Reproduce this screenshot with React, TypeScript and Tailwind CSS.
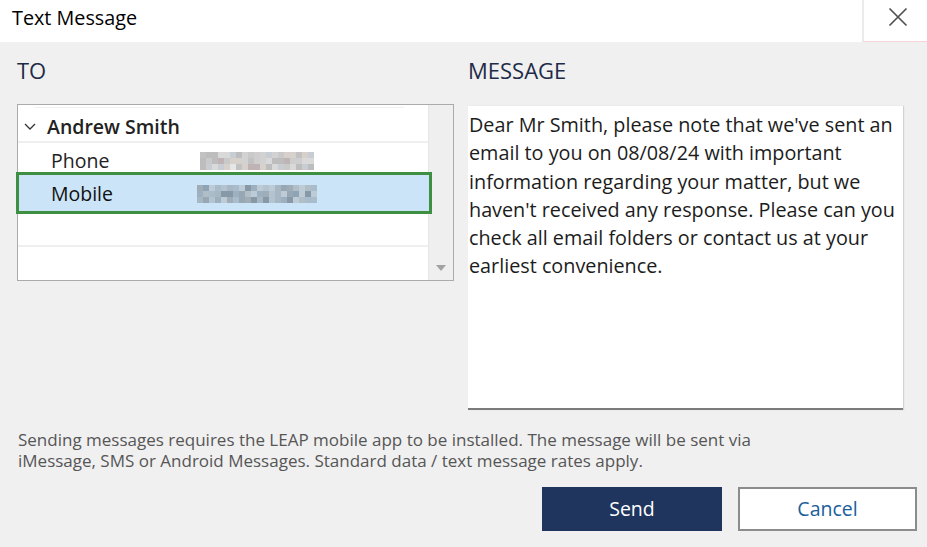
import React from "react";

const messageLines = [
  "Dear Mr Smith, please note that we've sent an",
  "email to you on 08/08/24 with important",
  "information regarding your matter, but we",
  "haven't received any response. Please can you",
  "check all email folders or contact us at your",
  "earliest convenience.",
];

const phonePalette = ["#d9d9d9", "#cecece", "#c9c9c9", "#c2c2c2", "#d6d2cb", "#c8cdd4", "#bfb3b5", "#e6e6e6", "#bdbdbd", "#d2d2d2"];
const mobilePalette = ["#a9bccb", "#9cb0bf", "#b3c4d0", "#8ea4b5", "#bccbd6", "#a0adb6", "#8799a7", "#a7b7c3", "#b0bec8", "#97a8b4"];

// blurred-out number, drawn as a grid of pixel blocks
const Pixelated = ({ cols, palette, seed }: { cols: number; palette: string[]; seed: number }) => {
  const cells = [];
  let s = seed;
  for (let r = 0; r < 3; r++) {
    for (let c = 0; c < cols; c++) {
      s = (s * 9301 + 49297) % 233280;
      const color = palette[Math.floor(s / 7) % palette.length];
      cells.push(<rect key={`${r}-${c}`} x={c * 6} y={r * 6} width={6} height={6} fill={color} />);
    }
  }
  return (
    <svg width={cols * 6} height={18} viewBox={`0 0 ${cols * 6} 18`}>
      {cells}
    </svg>
  );
};

const App = () => {
  return (
    <div className="w-[927px] h-[547px] bg-[#f0f0f0] flex flex-col font-['Open_Sans',sans-serif] overflow-hidden">
      {/* title bar */}
      <div className="h-[42px] bg-white flex justify-between shrink-0">
        <div className="pl-[12px] pt-[4px] text-[19.8px] leading-[27px] text-black">Text Message</div>
        <div className="w-[65px] h-full border-l-2 border-[#ebebeb] border-b border-b-[#f5d5d5] flex items-center justify-center pb-[8px] pl-[4px]">
          <svg width="20" height="20" viewBox="0 0 20 20">
            <path d="M1.5 1.5 L18.5 18.5 M18.5 1.5 L1.5 18.5" stroke="#505050" strokeWidth="1.7" fill="none" />
          </svg>
        </div>
      </div>

      {/* body */}
      <div className="flex gap-[14px] pl-[17px] pt-[13px]">
        <div className="w-[437px] flex flex-col">
          <div className="text-[22px] leading-[30px] text-[#1e2b48]">TO</div>
          <div className="mt-[19px] h-[177px] border border-[#ababab] bg-white flex">
            <div className="w-[410px] flex flex-col">
              <div className="ml-[16px] mr-[24px] mt-[2px] h-px bg-[#f0f0f0]" />
              <div className="h-[33px] flex items-center pt-[5px] pl-[6px]">
                <svg width="12" height="8" viewBox="0 0 12 8" className="mr-[11px]">
                  <path d="M1 1 L6 6 L11 1" stroke="#333" strokeWidth="1.3" fill="none" />
                </svg>
                <span className="text-[19.5px] font-semibold text-[#222]">Andrew Smith</span>
              </div>
              <div className="h-[2px] bg-[#efefef]" />
              <div className="h-[29px] flex items-center pt-[6px] pl-[33px]">
                <span className="w-[149px] text-[19.5px] text-[#222]">Phone</span>
                <Pixelated cols={19} palette={phonePalette} seed={7} />
              </div>
              <div className="relative h-[42px] -ml-[2px] -mr-[4px] border-[3px] border-[#3f8f42] bg-[#cce4f7] flex items-center pl-[32px] pt-[1px]">
                <span className="w-[146px] text-[19.5px] text-[#111]">Mobile</span>
                <Pixelated cols={20} palette={mobilePalette} seed={13} />
              </div>
              <div className="h-[31px]" />
              <div className="h-[2px] bg-[#efefef]" />
            </div>
            <div className="flex-1 bg-[#efefef] border-l border-[#e6e6e6] flex items-end justify-center pb-[8px]">
              <svg width="10" height="7" viewBox="0 0 10 7">
                <path d="M0 0 L10 0 L5 6 Z" fill="#a3a3a3" />
              </svg>
            </div>
          </div>
        </div>

        <div className="w-[435px] flex flex-col">
          <div className="text-[22px] leading-[30px] text-[#1e2b48]">MESSAGE</div>
          <div className="mt-[21px] h-[304px] bg-white border-b-2 border-[#7b7b7b] shadow-[1px_0_1px_rgba(0,0,0,0.12)] pt-[5px] pl-[1px] text-[19.8px] leading-[28.3px] text-[#1c1c1c]">
            {messageLines.map((line) => (
              <div key={line} className="whitespace-nowrap">
                {line}
              </div>
            ))}
          </div>
        </div>
      </div>

      {/* footer */}
      <div className="mt-[19px] pl-[18px] text-[17px] leading-[21px] text-[#565656]">
        <div>Sending messages requires the LEAP mobile app to be installed. The message will be sent via</div>
        <div>iMessage, SMS or Android Messages. Standard data / text message rates apply.</div>
      </div>

      <div className="mt-[16px] flex justify-end gap-[16px] pr-[10px]">
        <button className="w-[180px] h-[44px] bg-[#1f355d] text-white text-[19.5px]">Send</button>
        <button className="w-[179px] h-[44px] bg-white border-2 border-[#8c8c8c] text-[#1b5e9b] text-[19.5px]">Cancel</button>
      </div>
    </div>
  );
};

export default App;
